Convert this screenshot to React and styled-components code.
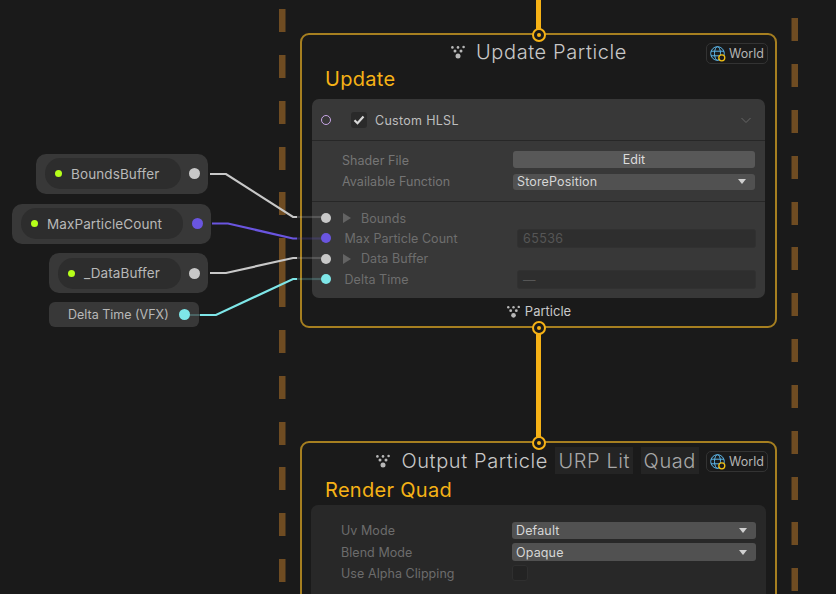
import React from 'react';
import styled, { createGlobalStyle } from 'styled-components';

const GlobalStyle = createGlobalStyle`
  html, body {
    margin: 0;
    padding: 0;
    background: #1a1a1a;
  }
  body {
    font-family: 'Inter', 'Liberation Sans', sans-serif;
  }
`;

const Canvas = styled.div`
  position: relative;
  width: 836px;
  height: 594px;
  overflow: hidden;
  background: #1a1a1a;
`;

const Layer = styled.svg`
  position: absolute;
  left: 0;
  top: 0;
  z-index: ${(p) => p.$z};
  pointer-events: none;
`;

const Context = styled.div`
  position: absolute;
  left: ${(p) => p.$left}px;
  top: ${(p) => p.$top}px;
  width: 477px;
  height: ${(p) => p.$height}px;
  box-sizing: border-box;
  border: 2px solid #a67f20;
  border-radius: 9px;
  background: #1a1a1a;
  display: flex;
  flex-direction: column;
`;

const TitleRow = styled.div`
  flex: none;
  height: 33px;
  margin-top: ${(p) => p.$gap}px;
  padding-right: ${(p) => p.$right || 0}px;
  display: flex;
  align-items: center;
  justify-content: ${(p) => (p.$end ? 'flex-end' : 'center')};
  gap: 10px;
  font-size: 20px;
  font-weight: 300;
  letter-spacing: 0.6px;
  color: #c8c8c8;
`;

const TitleTag = styled.span`
  display: block;
  height: 27px;
  line-height: 28px;
  padding: 0 3px;
  margin-left: -2.5px;
  background: #242424;
  color: #a8a8a8;
`;

const Badge = styled.div`
  position: absolute;
  left: 404px;
  top: ${(p) => p.$top}px;
  width: 62px;
  height: 21px;
  box-sizing: border-box;
  border: 1px solid #333;
  border-radius: 5px;
  display: flex;
  align-items: center;
  justify-content: center;
  gap: 3px;
  font-size: 12.5px;
  color: #b4b4b4;
`;

const Heading = styled.div`
  flex: none;
  margin: ${(p) => p.$gap}px 0 0 23px;
  font-size: 20px;
  line-height: 24px;
  letter-spacing: 0.3px;
  color: #f6b216;
`;

const Block = styled.div`
  flex: none;
  margin: ${(p) => p.$gap}px ${(p) => p.$side}px 0;
  border-radius: 7px;
  background: ${(p) => p.$bg};
  font-size: 12.5px;
  letter-spacing: 0.06px;
`;

const BlockHeader = styled.div`
  position: relative;
  height: 41px;
  padding: 1px 0 0 39px;
  box-sizing: content-box;
  height: 40px;
  display: flex;
  align-items: center;
  gap: 8px;
  border-bottom: 1px solid #272727;
  font-size: 12.5px;
  letter-spacing: 0.3px;
  color: #bebebe;
`;

const RingPort = styled.span`
  position: absolute;
  left: 9px;
  top: 16px;
  width: 10px;
  height: 10px;
  box-sizing: border-box;
  border: 1.8px solid #c8a6e6;
  border-radius: 50%;
`;

const Check = styled.span`
  width: 16px;
  height: 16px;
  box-sizing: border-box;
  border: ${(p) => (p.$empty ? '1px solid #2f2f2f' : 'none')};
  border-radius: 3px;
  background: ${(p) => (p.$empty ? '#232323' : '#2a2a2a')};
  display: flex;
  align-items: center;
  justify-content: center;
`;

const Chevron = styled.svg`
  position: absolute;
  right: 13px;
  top: 18px;
`;

const Settings = styled.div`
  padding: ${(p) => p.$pad}px 10px 0 ${(p) => p.$left}px;
  height: ${(p) => p.$height}px;
  box-sizing: border-box;
  border-bottom: ${(p) => (p.$line ? '1px solid #272727' : 'none')};
  display: flex;
  flex-direction: column;
  gap: ${(p) => p.$gap}px;
`;

const SettingRow = styled.div`
  display: grid;
  grid-template-columns: ${(p) => p.$label}px 1fr;
  align-items: center;
  height: ${(p) => p.$height || 17}px;
  color: ${(p) => (p.$dim ? '#6c6c6c' : '#757575')};
`;

const SettingLabel = styled.span`
  padding-top: ${(p) => p.$drop || 0}px;
`;

const EditButton = styled.div`
  height: 17px;
  line-height: 18px;
  border-radius: 3px;
  background: #585858;
  text-align: center;
  font-size: 12.5px;
  color: #dcdcdc;
`;

const Dropdown = styled.div`
  height: ${(p) => p.$height}px;
  padding: 0 9px 0 4px;
  border-radius: 3px;
  background: #515151;
  display: flex;
  align-items: center;
  justify-content: space-between;
  font-size: 12.5px;
  letter-spacing: 0.15px;
  color: #d6d6d6;
`;

const Caret = styled.span`
  width: 0;
  height: 0;
  border-left: 4.5px solid transparent;
  border-right: 4.5px solid transparent;
  border-top: 5px solid #d0d0d0;
`;

const Ports = styled.div`
  padding: 6px 0 9px;
  display: flex;
  flex-direction: column;
`;

const PortRow = styled.div`
  height: 20.3px;
  display: grid;
  grid-template-columns: ${(p) => (p.$arrow ? 156 : 172.5)}px 239px;
  align-items: center;
  position: relative;
  color: #6e6e6e;
  padding-left: ${(p) => (p.$arrow ? 49 : 32.5)}px;
`;

const PortDot = styled.span`
  position: absolute;
  left: 9px;
  top: 5px;
  width: 10px;
  height: 10px;
  border-radius: 50%;
  background: ${(p) => p.$color};
`;

const Fold = styled.span`
  position: absolute;
  left: 31px;
  top: 5px;
  width: 0;
  height: 0;
  border-top: 5px solid transparent;
  border-bottom: 5px solid transparent;
  border-left: 8px solid #636363;
`;

const ValueField = styled.div`
  height: 19px;
  line-height: 17px;
  padding-left: 5px;
  box-sizing: border-box;
  border: 1px solid #313131;
  border-radius: 3px;
  background: #2e2e2e;
  font-size: 12.5px;
  letter-spacing: 0.4px;
  color: #565656;
`;

const Footer = styled.div`
  flex: none;
  margin-top: 3px;
  height: 20px;
  display: flex;
  align-items: center;
  justify-content: center;
  gap: 4px;
  font-size: 13px;
  color: #c8c8c8;
`;

const FlowPort = styled.span`
  position: absolute;
  left: 531.5px;
  top: ${(p) => p.$top}px;
  width: 14px;
  height: 14px;
  box-sizing: border-box;
  border: 2px solid #f6b216;
  border-radius: 50%;
  background: #1a1a1a;
  z-index: 3;
  display: flex;
  align-items: center;
  justify-content: center;
  &::after {
    content: '';
    width: 4px;
    height: 4px;
    border-radius: 50%;
    background: #f6b216;
  }
`;

const PropertyNode = styled.div`
  position: absolute;
  left: ${(p) => p.$left}px;
  top: ${(p) => p.$top}px;
  width: ${(p) => p.$width}px;
  height: 40px;
  box-sizing: border-box;
  padding: 0 8.5px 0 9px;
  border-radius: 10px;
  background: #383838;
  display: flex;
  align-items: center;
  justify-content: space-between;
  z-index: 1;
`;

const Pill = styled.div`
  width: ${(p) => p.$width}px;
  height: 31px;
  box-sizing: border-box;
  padding-left: 10px;
  border-radius: 15px;
  background: #2d2d2d;
  display: flex;
  align-items: center;
  gap: 9px;
  font-size: 13.5px;
  letter-spacing: 0.1px;
  color: #b8b8b8;
`;

const LiveDot = styled.span`
  width: 7px;
  height: 7px;
  border-radius: 50%;
  background: #b6ff1a;
`;

const OutDot = styled.span`
  width: 11px;
  height: 11px;
  border-radius: 50%;
  background: ${(p) => p.$color};
`;

const TimeNode = styled.div`
  position: absolute;
  left: 49px;
  top: 302px;
  width: 150px;
  height: 25px;
  box-sizing: border-box;
  padding: 0 9.5px 0 19px;
  border-radius: 6px;
  background: #383838;
  display: flex;
  align-items: center;
  justify-content: space-between;
  font-size: 12.5px;
  color: #b8b8b8;
  z-index: 1;
`;

const leftDashes = [9, 55, 101, 147, 192, 238, 261, 284, 330, 376, 422, 467, 513, 559];
const rightDashes = [18, 64, 110, 156, 202, 247, 293, 339, 385, 431, 477, 522, 568];

const wires = [
  { color: '#c8c8c8', line: '210,174 226,174 293,217 297,217', fade: '297,217 322,217' },
  { color: '#6a55e0', line: '212,223.5 228,223.5 293,238.5 297,238.5', fade: '297,238.5 322,238.5' },
  { color: '#c8c8c8', line: '210,273 226,273 293,258 297,258', fade: '297,258 322,258' },
  { color: '#7ee6e8', line: '200,315 216,315 293,279 297,279', fade: '297,279 322,279' },
];

const ParticleIcon = ({ size = 16 }) => (
  <svg width={size} height={size * 0.875} viewBox="0 0 16 14" fill="#b8b8b8">
    <circle cx="2.4" cy="2.4" r="1.3" />
    <circle cx="8" cy="2.4" r="1.3" />
    <circle cx="13.6" cy="2" r="1.3" />
    <circle cx="5" cy="6" r="1.5" />
    <circle cx="11" cy="6" r="1.5" />
    <circle cx="8" cy="11" r="2.5" />
  </svg>
);

const GlobeIcon = () => (
  <svg width="16" height="16" viewBox="0 0 16 16" fill="none" stroke="#5cb6e8" strokeWidth="1">
    <circle cx="7.5" cy="7.5" r="6.8" />
    <ellipse cx="7.5" cy="7.5" rx="3" ry="6.8" />
    <path d="M1 5.2h13M1 9.8h13" />
    <circle cx="11.8" cy="11.8" r="3" fill="#1a1a1a" stroke="#f2c014" strokeWidth="1.3" />
  </svg>
);

const WorldBadge = ({ top }) => (
  <Badge $top={top}>
    <GlobeIcon />
    World
  </Badge>
);

const App = () => (
  <Canvas>
    <GlobalStyle />

    <Layer $z={0} width="836" height="594">
      {leftDashes.map((y) => (
        <rect key={y} x="279" y={y} width="6.5" height="23" fill="#6f4c22" />
      ))}
      {rightDashes.map((y) => (
        <rect key={y} x="791.5" y={y} width="6.5" height="23" fill="#6f4c22" />
      ))}
      <rect x="536" y="0" width="5" height="35" fill="#f6b216" />
      <rect x="536" y="328" width="5" height="115" fill="#f6b216" />
    </Layer>

    <Context $left={300} $top={33} $height={295}>
      <TitleRow $gap={0}>
        <ParticleIcon />
        Update Particle
      </TitleRow>
      <WorldBadge top={8} />
      <Heading $gap={-1}>Update</Heading>
      <Block $gap={8} $side={10} $bg="#383838">
        <BlockHeader>
          <RingPort />
          <Check>
            <svg width="12" height="10" viewBox="0 0 12 10" fill="none" stroke="#d8d8d8" strokeWidth="2.2">
              <path d="M1.5 5.2l3 3 6-6.6" />
            </svg>
          </Check>
          Custom HLSL
          <Chevron width="12" height="7" viewBox="0 0 12 7" fill="none" stroke="#666" strokeWidth="1">
            <path d="M1.5 1l4.5 4.5L10.5 1" />
          </Chevron>
        </BlockHeader>
        <Settings $pad={9} $left={30} $height={61} $gap={6} $line>
          <SettingRow $label={171}>
            <SettingLabel $drop={3}>Shader File</SettingLabel>
            <EditButton>Edit</EditButton>
          </SettingRow>
          <SettingRow $label={171}>
            <SettingLabel>Available Function</SettingLabel>
            <Dropdown $height={16}>
              StorePosition
              <Caret />
            </Dropdown>
          </SettingRow>
        </Settings>
        <Ports>
          <PortRow $arrow>
            <PortDot $color="#c8c8c8" />
            <Fold />
            Bounds
          </PortRow>
          <PortRow>
            <PortDot $color="#6a55e0" />
            Max Particle Count
            <ValueField>65536</ValueField>
          </PortRow>
          <PortRow $arrow>
            <PortDot $color="#c8c8c8" />
            <Fold />
            Data Buffer
          </PortRow>
          <PortRow>
            <PortDot $color="#7ee6e8" />
            Delta Time
            <ValueField>—</ValueField>
          </PortRow>
        </Ports>
      </Block>
      <Footer>
        <ParticleIcon size={15} />
        Particle
      </Footer>
    </Context>

    <FlowPort $top={28} />
    <FlowPort $top={321} />
    <FlowPort $top={436} />

    <Context $left={300} $top={441} $height={180}>
      <TitleRow $gap={1} $end $right={76}>
        <ParticleIcon />
        Output Particle
        <TitleTag>URP Lit</TitleTag>
        <TitleTag>Quad</TitleTag>
      </TitleRow>
      <WorldBadge top={8} />
      <Heading $gap={1}>Render Quad</Heading>
      <Block $gap={3} $side={9} $bg="#282828">
        <Settings $pad={17} $left={30} $height={120} $gap={4}>
          <SettingRow $dim $label={171} $height={17}>
            <SettingLabel>Uv Mode</SettingLabel>
            <Dropdown $height={17}>
              Default
              <Caret />
            </Dropdown>
          </SettingRow>
          <SettingRow $dim $label={171} $height={18}>
            <SettingLabel>Blend Mode</SettingLabel>
            <Dropdown $height={18}>
              Opaque
              <Caret />
            </Dropdown>
          </SettingRow>
          <SettingRow $dim $label={171} $height={15}>
            <SettingLabel>Use Alpha Clipping</SettingLabel>
            <Check $empty />
          </SettingRow>
        </Settings>
      </Block>
    </Context>

    <PropertyNode $left={36} $top={153.5} $width={172}>
      <Pill $width={136}>
        <LiveDot />
        BoundsBuffer
      </Pill>
      <OutDot $color="#c8c8c8" />
    </PropertyNode>
    <PropertyNode $left={12} $top={203.5} $width={199}>
      <Pill $width={162}>
        <LiveDot />
        MaxParticleCount
      </Pill>
      <OutDot $color="#6a55e0" />
    </PropertyNode>
    <PropertyNode $left={49} $top={253} $width={159}>
      <Pill $width={123}>
        <LiveDot />
        _DataBuffer
      </Pill>
      <OutDot $color="#c8c8c8" />
    </PropertyNode>
    <TimeNode>
      Delta Time (VFX)
      <OutDot $color="#7ee6e8" />
    </TimeNode>

    <Layer $z={2} width="836" height="594" fill="none">
      {wires.map((w) => (
        <g key={w.line} stroke={w.color} strokeWidth="2.2">
          <polyline points={w.line} />
          <polyline points={w.fade} opacity="0.22" />
        </g>
      ))}
      <polyline points="189,315 200,315" stroke="#7ee6e8" strokeWidth="2" opacity="0.25" />
    </Layer>
  </Canvas>
);

export default App;
